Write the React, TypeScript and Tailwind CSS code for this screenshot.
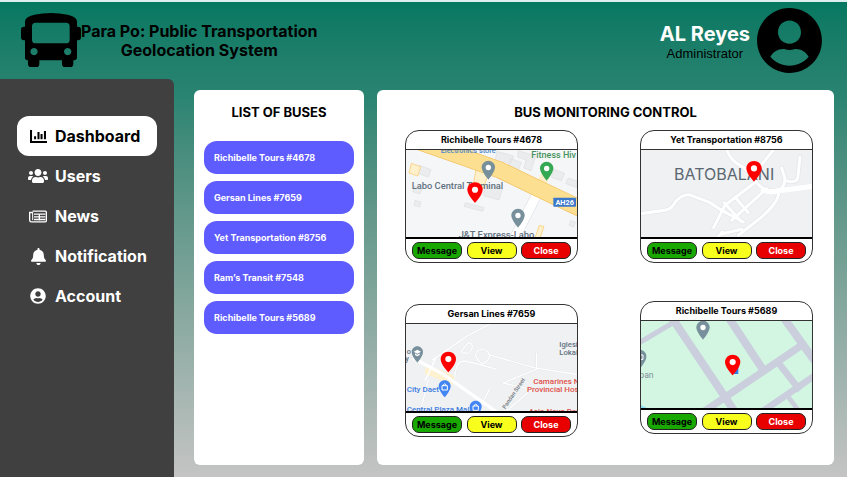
import type { ReactNode } from "react";
import { FaBell, FaUserCircle, FaUsers } from "react-icons/fa";

function BusIcon() {
  return (
    <svg viewBox="0 0 180 162" className="h-[54px] w-[60px]" aria-hidden="true">
      <path
        fillRule="evenodd"
        d="M12 25Q12 12 40 5Q65 0 90 0T140 5Q168 12 168 25V41h3q9 0 9 9v23q0 9-9 9h-3v52q0 7-11 8v10q0 10-9 10h-16q-9 0-9-10v-10H55v10q0 10-9 10H30q-9 0-9-10v-10q-9-1-9-8V82H9q-9 0-9-9V50q0-9 9-9h3zM44 29q-11 0-11 11v40q0 11 11 11h91q11 0 11-11V40q0-11-11-11zM39 105a11 11 0 1 0 .1 0zM140 105a11 11 0 1 0 .1 0z"
      />
    </svg>
  );
}

function ChartIcon() {
  return (
    <svg viewBox="0 0 50 38" className="h-[13px] w-[17px]" fill="currentColor" aria-hidden="true">
      <path d="M0 0h6v32h44v6H0zM12 18h6v9h-6zM22 6h6v21h-6zM31 12h6v15h-6zM41 3h6v24h-6z" />
    </svg>
  );
}

function NewsIcon() {
  return (
    <svg viewBox="0 0 54 38" className="h-[13px] w-[18px]" fill="none" stroke="currentColor" aria-hidden="true">
      <path d="M11 3h38q3 0 3 3v26q0 3-3 3H7q-5 0-5-5V7h9" strokeWidth="4" />
      <path d="M11 5v25" strokeWidth="3" />
      <path d="M15 12h34M15 20h34M15 28h34" strokeWidth="4" />
      <path d="M31 12v18" strokeWidth="4" />
    </svg>
  );
}

const navItems = [
  { label: "Dashboard", icon: <ChartIcon />, active: true },
  { label: "Users", icon: <FaUsers className="size-5" /> },
  { label: "News", icon: <NewsIcon /> },
  { label: "Notification", icon: <FaBell className="size-[17px]" /> },
  { label: "Account", icon: <FaUserCircle className="size-4" /> },
];

const buses = [
  "Richibelle Tours #4678",
  "Gersan Lines #7659",
  "Yet Transportation #8756",
  "Ram’s Transit #7548",
  "Richibelle Tours #5689",
];

type PinProps = { x: number; y: number; w?: number; h?: number; fill: string; children?: ReactNode };

/* Map marker whose tip sits on (x, y). */
function Pin({ x, y, w = 40, h = 57, fill, children }: PinProps) {
  return (
    <g>
      <path
        d="M12 2C8.13 2 5 5.13 5 9c0 5.25 7 13 7 13s7-7.75 7-13c0-3.87-3.13-7-7-7z"
        fill={fill}
        transform={`translate(${x} ${y}) scale(${w / 14} ${h / 20}) translate(-12 -22)`}
      />
      {children ?? <circle cx={x} cy={y - h * 0.64} r={w * 0.2} fill="#fff" />}
    </g>
  );
}

function RedPin({ x, y }: { x: number; y: number }) {
  return <Pin x={x} y={y} w={46} h={62} fill="#ff0000" />;
}

function MapView({ box, label, children }: { box: string; label: string; children: ReactNode }) {
  return (
    <svg
      viewBox={box}
      preserveAspectRatio="xMidYMid slice"
      role="img"
      aria-label={label}
      className="block h-[87px] w-full font-[Roboto,sans-serif]"
    >
      {children}
    </svg>
  );
}

function TerminalMap() {
  return (
    <MapView box="18 74 513 261" label="Map of Labo Central Terminal">
      <rect x="0" y="60" width="550" height="290" fill="#f5f6f8" />
      <g fill="#ebecee" stroke="#dcdee0" strokeWidth="2">
        <path d="M57 120l36 13-8 22-36-12zM44 182l22 8-6 16-22-7zM45 225l18 5-4 15-17-4z" />
        <path d="M196 232l56 15-4 11-56-15zM255 176l52 14-10 34-46-13z" />
        <path d="M290 78l50 14-8 22-20-6-6 16-22-7zM332 100l32 11-10 26-32-10zM355 76l52 16-14 44-22-8 8-24-26-9zM462 132l32 12-10 22-30-10zM505 158l26 9v20l-34-12zM360 172l14 6-5 12-13-5zM512 286l14 5-5 14-13-5z" />
      </g>
      <path d="M34 114l28 10-9 28-26-9zM228 132l38 12-16 44-30-10zM418 300l14 4-14 40-14-4z" fill="#fff0cc" stroke="#f6c766" strokeWidth="2" />
      <path d="M412 205L345 336" stroke="#dfe1e4" strokeWidth="32" />
      <path d="M412 205L345 336" stroke="#fff" strokeWidth="28" />
      <path d="M436 150l-24 55" stroke="#fdeec9" strokeWidth="28" />
      <path d="M55 48L300 134 420 192 560 258" fill="none" stroke="#f2bd55" strokeWidth="51" />
      <path d="M55 48L300 134 420 192 560 258" fill="none" stroke="#fcdf90" strokeWidth="47" />
      <g fontWeight="500">
        <text x="122" y="82" fontSize="22" fill="#4a86c8">Electronics store</text>
        <text x="394" y="99" fontSize="27" fill="#45935c">Fitness Hiv</text>
        <text x="35" y="192" fontSize="28" fill="#62727f">Labo Central Terminal</text>
        <text x="176" y="338" fontSize="28" fill="#62727f">J&amp;T Express-Labo</text>
      </g>
      <Pin x={265} y={163} fill="#78909c" />
      <Pin x={440} y={166} fill="#34a853" />
      <Pin x={354} y={307} fill="#78909c" />
      <rect x="460" y="217" width="68" height="27" rx="2" fill="#3b78ca" />
      <text x="494" y="238" fontSize="22" fontWeight="700" fill="#fff" textAnchor="middle">AH26</text>
      <RedPin x={225} y={233} />
    </MapView>
  );
}

function BatobalaniRoads() {
  return (
    <>
      <path d="M10 266L90 255Q110 252 122 228Q150 200 172 212L225 232 262 256 325 290" />
      <path d="M270 60Q285 105 312 118Q345 135 368 175Q395 205 430 194L540 180" />
      <path d="M415 74L370 130M362 170L270 240 236 306M395 190L290 285M430 200Q435 225 380 275L310 330M262 320L240 345M262 325L320 312" />
      <path d="M268 232L320 290M300 215L340 262M440 128L450 160Q448 190 425 200M495 95L488 160Q480 175 450 165" />
    </>
  );
}

function BatobalaniMap() {
  return (
    <MapView box="18 74 513 261" label="Map of Batobalani">
      <rect x="0" y="60" width="550" height="290" fill="#f0f1f3" />
      <g fill="none" stroke="#e3e5e8" strokeWidth="13" strokeLinecap="round">
        <BatobalaniRoads />
      </g>
      <g fill="none" stroke="#fff" strokeWidth="9" strokeLinecap="round">
        <BatobalaniRoads />
      </g>
      <path d="M380 190Q400 205 430 196L540 182" fill="none" stroke="#fff" strokeWidth="15" />
      <text x="117" y="164" fontSize="48" fill="#5b6770" className="font-[Inter,sans-serif]">BATOBALANI</text>
      <RedPin x={357} y={169} />
    </MapView>
  );
}

function DaetMap() {
  return (
    <MapView box="18 69 513 261" label="Map of Daet">
      <rect x="0" y="50" width="550" height="300" fill="#f0f1f3" />
      <path d="M78 190l86 34-6 28-84-34z" fill="#fdf1cf" />
      <g fill="none" stroke="#e3e5e8" strokeWidth="6">
        <path d="M95 178L200 106 275 66M195 155Q178 160 188 145L205 125Q225 130 212 150Q205 162 195 155M246 188Q215 165 235 148Q262 140 270 165Q262 185 246 188M165 230Q165 180 195 180L245 192 290 205M265 160L400 200 540 222M410 155V205L310 246 380 262M85 235L60 335M320 330L400 260M250 300L270 262" />
      </g>
      <g fill="none" stroke="#fff" strokeWidth="4">
        <path d="M95 178L200 106 275 66M195 155Q178 160 188 145L205 125Q225 130 212 150Q205 162 195 155M246 188Q215 165 235 148Q262 140 270 165Q262 185 246 188M165 230Q165 180 195 180L245 192 290 205M265 160L400 200 540 222M410 155V205L310 246 380 262M85 235L60 335M320 330L400 260M250 300L270 262M110 165L75 240" />
      </g>
      <path d="M40 172L130 220 300 340" fill="none" stroke="#fff" strokeWidth="10" />
      <g fontWeight="500">
        <text x="20" y="158" fontSize="22" fill="#62727f">o</text>
        <text x="16" y="181" fontSize="22" fill="#62727f">y</text>
        <text x="478" y="139" fontSize="23" fill="#62727f">Iglesi</text>
        <text x="478" y="162" fontSize="23" fill="#62727f">Lokal</text>
        <text x="400" y="249" fontSize="24" fill="#df5049">Camarines N</text>
        <text x="381" y="272" fontSize="24" fill="#df5049">Provincial Hos</text>
        <text x="386" y="339" fontSize="24" fill="#df5049">Asia Nova Rou</text>
        <text x="20" y="273" fontSize="24" fill="#3f7de0">City Daet</text>
        <text x="20" y="333" fontSize="24" fill="#3f7de0">Central Plaza Mall</text>
        <text transform="translate(316 325) rotate(-56)" fontSize="17" fill="#6d757c">Pandan Street</text>
      </g>
      <Pin x={52} y={185} w={34} h={49} fill="#78909c">
        <path d="M41 152l11-6 11 6-11 6zM45 157v5l7 4 7-4v-5l-7 4z" fill="#fff" />
      </Pin>
      <Pin x={134} y={289} w={36} h={51} fill="#4285f4">
        <path d="M126 254h16v13h-16zM130 254v-3q4-5 8 0v3" fill="#4285f4" stroke="#fff" strokeWidth="3" />
      </Pin>
      <Pin x={227} y={350} w={36} h={51} fill="#4285f4">
        <path d="M219 315h16v13h-16zM223 315v-3q4-5 8 0v3" fill="#4285f4" stroke="#fff" strokeWidth="3" />
      </Pin>
      <RedPin x={145} y={214} />
    </MapView>
  );
}

function ParkMap() {
  return (
    <MapView box="18 72 513 261" label="Map of the park district">
      <rect x="0" y="50" width="550" height="300" fill="#d2f6e1" />
      <g fill="none" stroke="#cacedd" strokeWidth="24">
        <path d="M112 64L300 345M280 60L385 220M430 40L545 200" />
        <path d="M205 345L500 145" strokeWidth="22" />
        <path d="M0 145L130 68" strokeWidth="15" />
        <path d="M432 200L495 280M380 345L545 232" strokeWidth="20" />
        <path d="M460 300L490 340" strokeWidth="14" />
      </g>
      <path d="M10 320l28 14H10z" fill="#8edff2" />
      <text x="56" y="243" fontSize="26" fill="#82919b" textAnchor="end">pan</text>
      <Pin x={15} y={214} w={38} h={55} fill="#78909c">
        <path d="M14 174h10v13H14z" fill="none" stroke="#fff" strokeWidth="3" />
      </Pin>
      <Pin x={204} y={128} fill="#78909c" />
      <rect x="292" y="210" width="18" height="21" rx="2" fill="#2e7fe8" />
      <RedPin x={293} y={235} />
    </MapView>
  );
}

function BusCard({ name, map }: { name: string; map: ReactNode }) {
  return (
    <article className="w-[173px] overflow-hidden rounded-[14px] border border-[#333] bg-white">
      <h3 className="h-[19px] border-b border-[#333] text-center text-[9px] leading-[18px] font-bold">
        {name}
      </h3>
      {map}
      <div className="flex h-[25px] justify-between border-t-2 border-black px-[6px] py-[3px] text-[9px] leading-4 font-bold">
        <button className="w-[50px] rounded-[7px] border border-[#222] bg-[#18a800]">Message</button>
        <button className="w-[50px] rounded-[7px] border border-[#222] bg-[#f8ff1c]">View</button>
        <button className="w-[50px] rounded-[7px] border border-[#222] bg-[#e80000] text-white">Close</button>
      </div>
    </article>
  );
}

export default function App() {
  return (
    <div className="flex min-h-screen flex-col border-t-2 border-[#dcefec] bg-linear-to-b from-[#057861] via-[#2a8472] via-20% to-[#c4c4c4] font-[Inter,sans-serif] text-black">
      <header className="flex h-[77px] items-start justify-between pr-6 pl-[21px]">
        <div className="flex pt-[11px]">
          <BusIcon />
          <h1 className="pt-[9px] text-center text-base leading-[19px] font-bold">
            Para Po: Public Transportation
            <br />
            Geolocation System
          </h1>
        </div>
        <div className="flex gap-[6px] pt-[5px]">
          <div className="pt-[15px] text-center">
            <p className="text-xl leading-6 font-bold text-white">AL Reyes</p>
            <p className="font-['Liberation_Sans',Arial,sans-serif] text-[13px] leading-[15px]">Administrator</p>
          </div>
          <FaUserCircle className="size-[67px]" />
        </div>
      </header>

      <div className="flex flex-1">
        <nav className="w-[174px] shrink-0 rounded-tr-md bg-[#404040] px-[17px] pt-[37px]">
          <ul>
            {navItems.map((item) => (
              <li key={item.label}>
                <a
                  href="#"
                  className={
                    item.active
                      ? "flex h-10 items-center rounded-xl bg-white pl-[11px] text-base font-bold"
                      : "flex h-10 items-center pl-[11px] text-base font-bold text-white"
                  }
                >
                  <span className="mr-[7px] flex w-5 shrink-0 justify-center">{item.icon}</span>
                  {item.label}
                </a>
              </li>
            ))}
          </ul>
        </nav>

        <main className="flex flex-1 gap-[13px] pt-[11px] pr-[13px] pb-3 pl-5">
          <section className="w-[170px] shrink-0 rounded-md bg-white px-[10px] pt-3">
            <h2 className="text-center text-[13px] leading-5 font-bold">LIST OF BUSES</h2>
            <ul className="mt-[19px] flex flex-col gap-[7px]">
              {buses.map((bus) => (
                <li key={bus}>
                  <button className="block h-[33px] w-full rounded-[13px] bg-[#5e5bff] pl-[10px] text-left text-[9px] font-bold text-white">
                    {bus}
                  </button>
                </li>
              ))}
            </ul>
          </section>

          <section className="flex-1 rounded-md bg-white pt-3">
            <h2 className="text-center text-[13px] leading-5 font-bold">BUS MONITORING CONTROL</h2>
            <div className="mt-2 flex justify-between pr-[21px] pl-7">
              <div className="flex flex-col gap-[41px]">
                <BusCard name="Richibelle Tours #4678" map={<TerminalMap />} />
                <BusCard name="Gersan Lines #7659" map={<DaetMap />} />
              </div>
              <div className="flex flex-col gap-[38px]">
                <BusCard name="Yet Transportation #8756" map={<BatobalaniMap />} />
                <BusCard name="Richibelle Tours #5689" map={<ParkMap />} />
              </div>
            </div>
          </section>
        </main>
      </div>
    </div>
  );
}
